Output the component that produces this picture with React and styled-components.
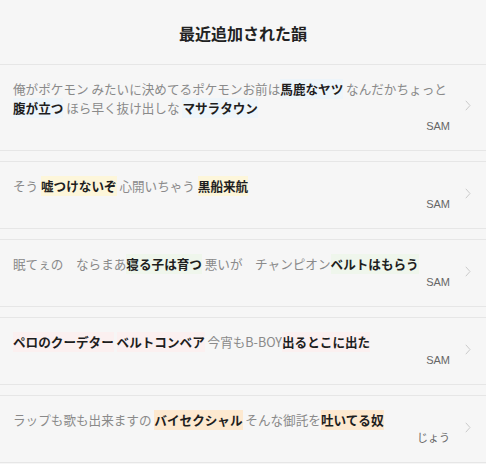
import React from "react";
import styled, { createGlobalStyle } from "styled-components";

const GlobalStyle = createGlobalStyle`
  html, body {
    margin: 0;
    padding: 0;
    background: #f6f6f6;
  }
  body {
    font-family: "Noto Sans CJK JP", "Liberation Sans", sans-serif;
  }
`;

const rhymes = [
  {
    tone: "#eef5fa",
    author: "SAM",
    parts: [
      ["俺がポケモン みたいに決めてるポケモンお前は"],
      ["馬鹿なヤツ", true],
      [" なんだかちょっと"],
      ["腹が立つ", true],
      [" ほら早く抜け出しな "],
      ["マサラタウン", true],
    ],
  },
  {
    tone: "#fdf6da",
    author: "SAM",
    parts: [
      ["そう "],
      ["嘘つけないぞ", true],
      [" 心開いちゃう "],
      ["黒船来航", true],
    ],
  },
  {
    tone: "#eff6ec",
    author: "SAM",
    parts: [
      ["眠てぇの　ならまあ"],
      ["寝る子は育つ", true],
      [" 悪いが　チャンピオン"],
      ["ベルトはもらう", true],
    ],
  },
  {
    tone: "#fbf0f0",
    author: "SAM",
    parts: [
      ["ペロのクーデター", true],
      [" "],
      ["ベルトコンベア", true],
      [" 今宵もB-BOY"],
      ["出るとこに出た", true],
    ],
  },
  {
    tone: "#fde9d0",
    author: "じょう",
    parts: [
      ["ラップも歌も出来ますの "],
      ["バイセクシャル", true],
      [" そんな御託を"],
      ["吐いてる奴", true],
    ],
  },
];

const Page = styled.div`
  width: 486px;
  background: #f6f6f6;
`;

const Header = styled.header`
  height: 64px;
  display: flex;
  align-items: center;
  justify-content: center;
  border-bottom: 1px solid #e6e6e6;
`;

const Title = styled.h1`
  margin: 0;
  padding-top: 2px;
  font-size: 16px;
  font-weight: 700;
  color: #222;
`;

const List = styled.ul`
  list-style: none;
  margin: 0;
  padding: 0;
  display: flex;
  flex-direction: column;
  gap: 10px;
`;

const Item = styled.li`
  display: flex;
  align-items: center;
  border-top: 1px solid #e6e6e6;
  border-bottom: 1px solid #e6e6e6;
  &:first-child {
    border-top: none;
  }
`;

const Body = styled.div`
  flex: 1;
  padding: 14px 0 15px 13px;
  min-width: 0;
`;

const Lyric = styled.p`
  margin: 0;
  width: 438px;
  font-size: 12.6px;
  line-height: 19px;
  color: #8a8a8a;
`;

const Mark = styled.span`
  font-weight: 700;
  color: #1e1e1e;
  background: ${(p) => p.$tone};
  padding-bottom: 1px;
`;

const Author = styled.div`
  width: 437px;
  text-align: right;
  font-family: "Liberation Sans", "Noto Sans CJK JP", sans-serif;
  font-size: 11px;
  line-height: 18px;
  color: #666;
`;

const Chevron = styled.div`
  width: 36px;
  display: flex;
  justify-content: center;
  padding-bottom: 4px;
  svg {
    display: block;
  }
`;

const Arrow = () => (
  <svg width="6" height="11" viewBox="0 0 6 11">
    <polyline
      points="0.8,0.8 5,5.5 0.8,10.2"
      fill="none"
      stroke="#cacaca"
      strokeWidth="1"
    />
  </svg>
);

export default function App() {
  return (
    <Page>
      <GlobalStyle />
      <Header>
        <Title>最近追加された韻</Title>
      </Header>
      <List>
        {rhymes.map((r, i) => (
          <Item key={i}>
            <Body>
              <Lyric>
                {r.parts.map(([text, bold], j) =>
                  bold ? (
                    <Mark key={j} $tone={r.tone}>
                      {text}
                    </Mark>
                  ) : (
                    <span key={j}>{text}</span>
                  )
                )}
              </Lyric>
              <Author>{r.author}</Author>
            </Body>
            <Chevron>
              <Arrow />
            </Chevron>
          </Item>
        ))}
      </List>
    </Page>
  );
}
